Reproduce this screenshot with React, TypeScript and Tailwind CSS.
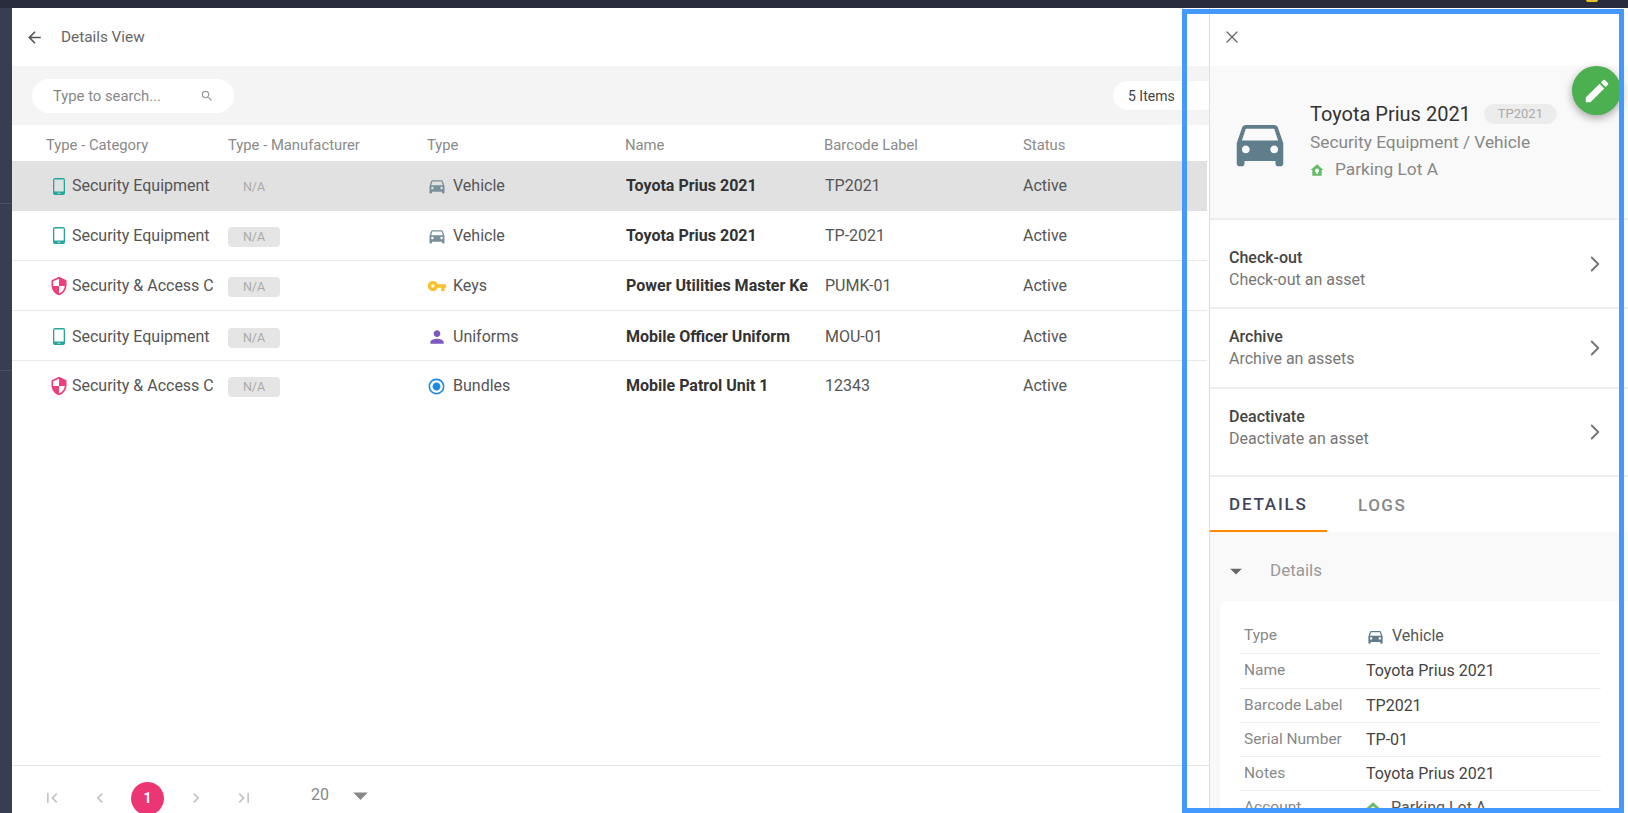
import React from "react";
import {
  MdArrowBack, MdSearch, MdDirectionsCar, MdVpnKey, MdPerson, MdRadioButtonChecked, MdSecurity,
  MdEdit, MdFirstPage, MdLastPage, MdArrowDropDown, MdChevronRight,
} from "react-icons/md";
import { X, ChevronRight } from "lucide-react";

const HomeDot = ({ className }: { className?: string }) => (
  <svg viewBox="0 0 24 24" className={className} fill="currentColor">
    <path fillRule="evenodd" d="M12 2 1 12h3v10h16V12h3L12 2zm0 7.5a3.5 3.5 0 0 1 1.2 6.8V19h-2.4v-2.7A3.5 3.5 0 0 1 12 9.5z" />
  </svg>
);

const Phone = () => (
  <svg viewBox="0 0 12 17" className="w-[12px] h-[17px] text-[#26a69a] shrink-0" fill="currentColor">
    <path fillRule="evenodd" d="M2 0h8a2 2 0 0 1 2 2v13a2 2 0 0 1-2 2H2a2 2 0 0 1-2-2V2a2 2 0 0 1 2-2zm-.7 1.6v11.9h9.4V1.6H1.300z" />
    <rect x="4.500" y="14.800" width="3" height="0.800" fill="#ffffff" opacity="0.8" />
  </svg>
);
const Shield = () => <MdSecurity className="w-[20px] h-[20px] text-[#ec407a] shrink-0" />;

type Row = { cat: "phone" | "shield"; catText: string; type: React.ReactNode; typeText: string; name: string; code: string; cls: string };

const car = <MdDirectionsCar className="w-[20px] h-[20px] text-[#78909c]" />;
const rows: Row[] = [
  { cat: "phone", catText: "Security Equipment", type: car, typeText: "Vehicle", name: "Toyota Prius 2021", code: "TP2021", cls: "bg-[#e1e1e1]" },
  { cat: "phone", catText: "Security Equipment", type: car, typeText: "Vehicle", name: "Toyota Prius 2021", code: "TP-2021", cls: "border-b border-[#e8e8e8]" },
  { cat: "shield", catText: "Security & Access Control", type: <MdVpnKey className="w-[20px] h-[20px] text-[#fbc02d]" />, typeText: "Keys", name: "Power Utilities Master Key", code: "PUMK-01", cls: "border-b border-[#e8e8e8]" },
  { cat: "phone", catText: "Security Equipment", type: <MdPerson className="w-[20px] h-[20px] text-[#7e57c2]" />, typeText: "Uniforms", name: "Mobile Officer Uniform", code: "MOU-01", cls: "border-b border-[#e8e8e8] pt-[2px]" },
  { cat: "shield", catText: "Security & Access Control", type: <MdRadioButtonChecked className="w-[19px] h-[19px] text-[#1e88e5]" />, typeText: "Bundles", name: "Mobile Patrol Unit 1", code: "12343", cls: "" },
];

const actions = [
  { t: "Check-out", s: "Check-out an asset", cls: "h-[89px] pt-[27px]" },
  { t: "Archive", s: "Archive an assets", cls: "h-[80px] pt-[17px]" },
  { t: "Deactivate", s: "Deactivate an asset", cls: "h-[88px] pt-[17px]" },
];

const details = [
  { k: "Type", v: "Vehicle", h: "h-[35px]" },
  { k: "Name", v: "Toyota Prius 2021", h: "h-[35px]" },
  { k: "Barcode Label", v: "TP2021", h: "h-[34px]" },
  { k: "Serial Number", v: "TP-01", h: "h-[34px]" },
  { k: "Notes", v: "Toyota Prius 2021", h: "h-[34px]" },
  { k: "Account", v: "Parking Lot A", h: "h-[34px]" },
];

export default function App() {
  return (
    <div className="relative w-[1628px] h-[813px] overflow-hidden flex flex-col bg-white font-[Roboto,sans-serif] text-[16px]">
      <div className="h-[8px] shrink-0 bg-[#292c3d]" />
      <div className="flex flex-1 min-h-0">
        <div className="w-[12px] shrink-0 bg-[#383d52] flex flex-col">
          <div className="h-[196px] border-b border-[#4a4f64]" />
          <div className="h-[167px] border-b border-[#4a4f64]" />
        </div>

        {/* Main */}
        <div className="w-[1197px] shrink-0 flex flex-col">
          <div className="h-[58px] shrink-0 flex items-center pl-[13px] text-[#666]">
            <MdArrowBack className="w-[19px] h-[19px] text-[#555]" />
            <span className="ml-[17px] text-[15.300px] text-[#666]">Details View</span>
          </div>
          <div className="h-[59px] shrink-0 bg-[#f4f4f4] flex items-center justify-between pl-[20px]">
            <div className="w-[202px] h-[34px] rounded-full bg-white flex items-center justify-between pl-[21px] pr-[20px]">
              <span className="text-[14.800px] text-[#888] pt-[1px]">Type to search...</span>
              <MdSearch className="w-[14px] h-[14px] text-[#999]" />
            </div>
            <div className="w-[96px] h-[29px] rounded-l-full bg-white flex items-center pl-[15px] pt-[1px] text-[14px] text-[#444]">5 Items</div>
          </div>

          <div className="h-[36px] shrink-0 grid grid-cols-[182px_199px_198px_199px_199px_auto] items-center pl-[34px] pt-[5px] text-[14.800px] text-[#8a8a8a]">
            <span>Type - Category</span>
            <span>Type - Manufacturer</span>
            <span>Type</span>
            <span>Name</span>
            <span>Barcode Label</span>
            <span>Status</span>
          </div>

          <div className="flex-1 min-h-0 mr-[2px]">
            {rows.map((r, i) => (
              <div
                key={i}
                className={`h-[50px] grid grid-cols-[182px_199px_198px_199px_199px_auto] items-center pl-[34px] text-[#555] ${r.cls}`}
              >
                <div className="flex items-center overflow-hidden pr-[15px] whitespace-nowrap">
                  <span className="w-[26px] shrink-0 flex items-center justify-center pr-[1px]">{r.cat === "phone" ? <Phone /> : <Shield />}</span>
                  <span className="overflow-hidden">{r.catText}</span>
                </div>
                <div>
                  <span className={`inline-flex items-center justify-center w-[52px] h-[20px] mt-[2px] rounded-[4px] text-[12.500px] text-[#aaa] ${i === 0 ? "" : "bg-[#e5e5e5]"}`}>N/A</span>
                </div>
                <div className="flex items-center">
                  <span className="w-[26px] flex items-center justify-start">{r.type}</span>
                  <span>{r.typeText}</span>
                </div>
                <div className="overflow-hidden whitespace-nowrap font-bold text-[#333] pl-[1px] pr-[16px]">
                  <span className="block overflow-hidden">{r.name}</span>
                </div>
                <div className="pl-[1px]">{r.code}</div>
                <div>Active</div>
              </div>
            ))}
          </div>

          <div className="h-[48px] shrink-0 border-t border-[#e4e4e4] flex items-center pl-[30px] pt-[17px] text-[#c4c4c4]">
            <MdFirstPage className="w-[20px] h-[20px]" />
            <MdChevronRight className="w-[20px] h-[20px] rotate-180 ml-[28px]" />
            <span className="w-[33px] h-[33px] rounded-full bg-[#ec3573] text-white font-bold text-[14px] flex items-center justify-center ml-[21px] shrink-0">1</span>
            <MdChevronRight className="w-[20px] h-[20px] ml-[22px]" />
            <MdLastPage className="w-[20px] h-[20px] ml-[28px]" />
            <span className="ml-[57px] text-[16px] text-[#888] -mt-[6px]">20</span>
            <MdArrowDropDown className="w-[35px] h-[35px] text-[#888] ml-[14px] -mt-[5px]" />
          </div>
        </div>

        {/* Panel */}
        <div className="flex-1 min-w-0 flex flex-col border-l border-[#dedede]">
          <div className="h-[58px] shrink-0 flex items-center pl-[12px]">
            <X className="w-[20px] h-[20px] text-[#666]" strokeWidth={1.5} />
          </div>
          <div className="h-[154px] shrink-0 bg-[#f9f9f9] border-b-2 border-[#eeeeee] flex pl-[19px]">
            <MdDirectionsCar className="w-[62px] h-[62px] mt-[46px] text-[#607d8b] shrink-0" />
            <div className="ml-[19px] mt-[33px] min-w-0">
              <div className="flex items-center h-[29px]">
                <span className="text-[20px] text-[#333]">Toyota Prius 2021</span>
                <span className="ml-[13px] mt-[1px] w-[73px] h-[20px] rounded-full bg-[#ececec] flex items-center justify-center text-[13px] text-[#aaa]">TP2021</span>
              </div>
              <div className="text-[17.300px] leading-[28px] text-[#888]">Security Equipment / Vehicle</div>
              <div className="flex items-center h-[28px] text-[17.300px] text-[#888]">
                <HomeDot className="w-[14px] h-[14px] text-[#66bb6a]" />
                <span className="ml-[11px]">Parking Lot A</span>
              </div>
            </div>
          </div>

          {actions.map((a) => (
            <div key={a.t} className={`${a.cls} shrink-0 border-b-2 border-[#eeeeee] pl-[19px] relative`}>
              <div className="text-[16px] font-medium leading-[22px] text-[#444]">{a.t}</div>
              <div className="text-[16px] leading-[22px] text-[#777]">{a.s}</div>
              <ChevronRight className="absolute right-[20px] top-1/2 -translate-y-1/2 w-[26px] h-[26px] text-[#777]" strokeWidth={1.8} />
            </div>
          ))}

          <div className="h-[55px] shrink-0 flex">
            <div className="w-[117px] h-full border-b-2 border-[#fb8c00] flex items-center pl-[19px] pt-[3px] text-[17px] font-medium tracking-[1.800px] text-[#40455c]">DETAILS</div>
            <div className="ml-[31px] h-full flex items-center pt-[2px] text-[17px] font-medium tracking-[1.500px] text-[#888]">LOGS</div>
          </div>

          <div className="flex-1 min-h-0 bg-[#f9f9f9] overflow-hidden">
            <div className="h-[69px] flex items-center pl-[12px] pt-[8px]">
              <MdArrowDropDown className="w-[28px] h-[28px] text-[#666]" />
              <span className="ml-[20px] text-[17px] text-[#999]">Details</span>
            </div>
            <div className="ml-[10px] bg-white rounded-tl-[8px] pt-[18px] pl-[20px] pr-[27px]">
              {details.map(({ k, v, h }) => (
                <div key={k} className={`${h} border-b border-[#efefef] flex items-center pl-[4px]`}>
                  <span className="w-[122px] shrink-0 text-[15.500px] text-[#888]">{k}</span>
                  {k === "Type" ? (
                    <span className="flex items-center text-[#555]">
                      <MdDirectionsCar className="w-[19px] h-[19px] text-[#607d8b] mr-[7px]" />
                      {v}
                    </span>
                  ) : k === "Account" ? (
                    <span className="flex items-center text-[#555]">
                      <HomeDot className="w-[14px] h-[14px] text-[#66bb6a] mr-[11px]" />
                      {v}
                    </span>
                  ) : (
                    <span className="text-[#444]">{v}</span>
                  )}
                </div>
              ))}
            </div>
          </div>
        </div>
      </div>

      {/* Overlays */}
      <div className="absolute left-[1586px] top-0 w-[12px] h-[2px] rounded-b-full bg-[#e8c12f]" />
      <div className="absolute left-[1572px] top-[66px] w-[49px] h-[49px] rounded-full bg-[#4caf50] shadow-[0_3px_8px_rgba(0,0,0,0.35)] flex items-center justify-center">
        <MdEdit className="w-[30px] h-[30px] text-white" />
      </div>
      <div className="absolute left-[1182px] top-[9px] w-[442px] h-[804px] border-[5px] border-[#4499ff] pointer-events-none" />
    </div>
  );
}
